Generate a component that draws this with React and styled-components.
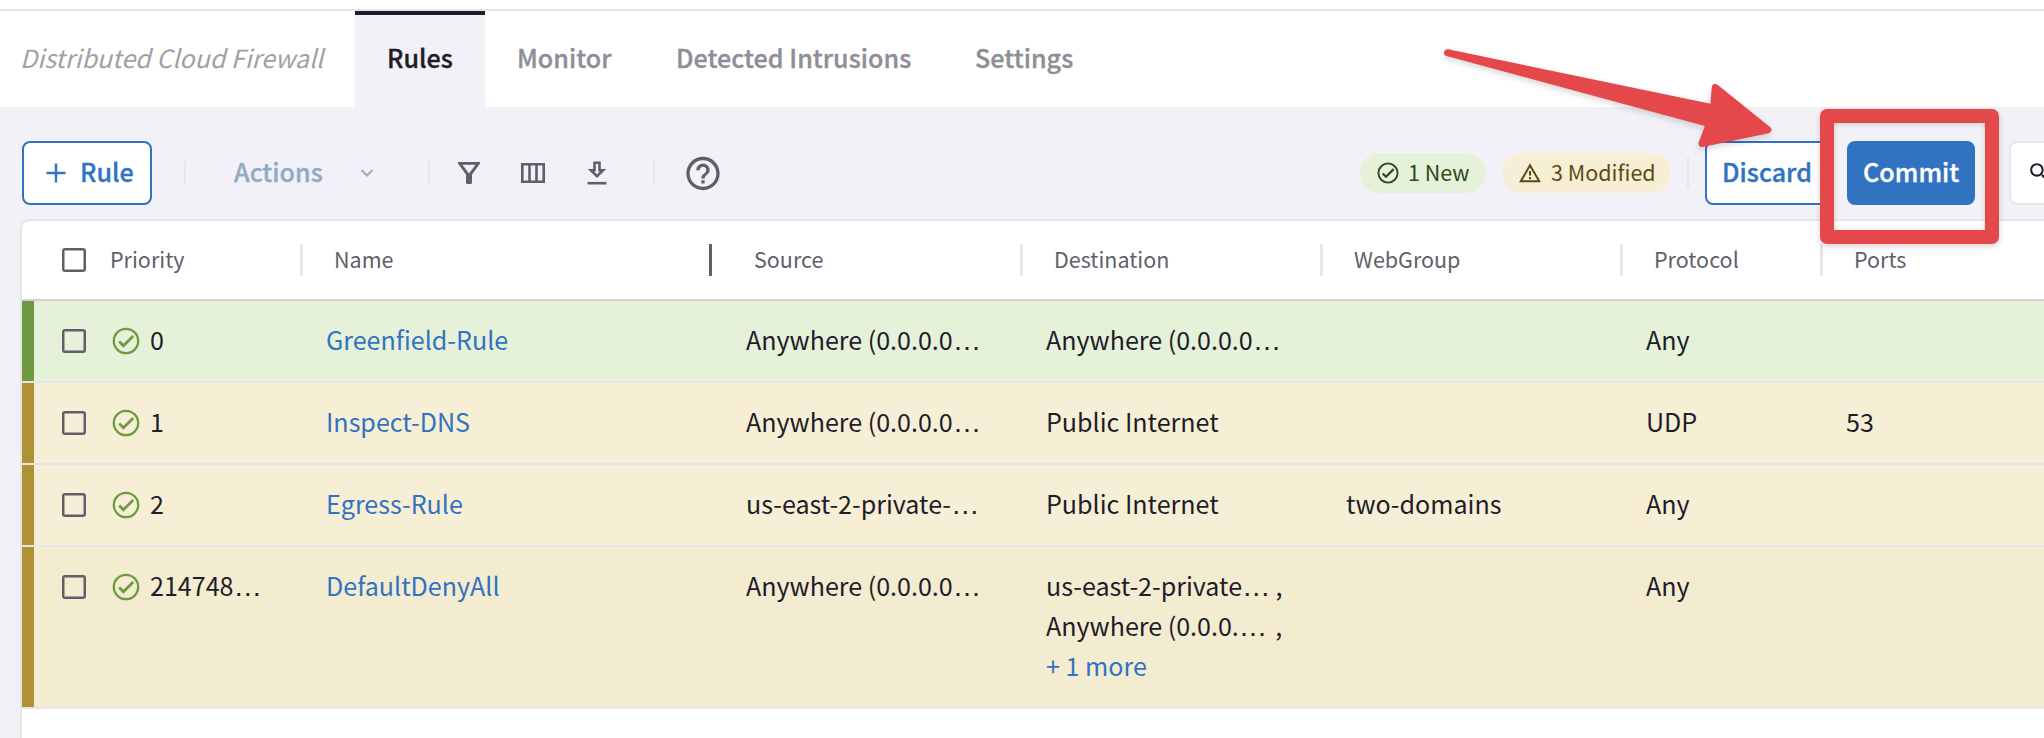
import React from "react";
import styled, { createGlobalStyle, css } from "styled-components";
import { MdHelpOutline, MdSearch } from "react-icons/md";

const c = {
  page: "#f2f1f7",
  line: "#e6e5ea",
  strongLine: "#d1cfda",
  ink: "#1e1d29",
  icon: "#605f69",
  blue: "#3173c0",
  muted: "#91abc3",
  green: "#2f4a1c",
  brown: "#5b4b12",
  red: "#e4484b",
};

const Global = createGlobalStyle`
  * { box-sizing: border-box; }
  body {
    margin: 0;
    background: ${c.page};
    color: ${c.ink};
    font-family: "Noto Sans CJK SC", "Noto Sans", sans-serif;
    font-size: 25.07px;
    line-height: 40px;
    overflow: hidden;
  }
`;

const semibold = css`
  font-weight: 500;
  letter-spacing: 0.05px;
  -webkit-text-stroke: 0.35px currentColor;
`;

const Page = styled.div`
  position: relative;
  width: 2044px;
  height: 738px;
  overflow: hidden;
  display: flex;
  flex-direction: column;
`;

const TopStrip = styled.div`
  flex: none;
  height: 11px;
  background: #fff;
  border-bottom: 2px solid ${c.line};
`;

const TabBar = styled.nav`
  flex: none;
  display: flex;
  height: 96px;
  background: #fff;
  white-space: nowrap;
`;

const Title = styled.div`
  width: 355px;
  padding: 26px 0 0 20px;
  font-style: italic;
  color: #a1a0a5;
`;

const Tab = styled.div`
  width: ${(p) => p.$w}px;
  padding: 22px 0 0 32px;
  border-top: 4px solid transparent;
  ${semibold}
  color: #8f8e97;
  ${(p) =>
    p.$active &&
    css`
      background: ${c.page};
      border-top-color: ${c.ink};
      color: ${c.ink};
    `}
`;

const Toolbar = styled.div`
  flex: none;
  display: flex;
  align-items: center;
  height: 112px;
  padding: 20px 0 0 22px;
  white-space: nowrap;
`;

const Button = styled.button`
  flex: none;
  display: flex;
  align-items: center;
  gap: 14px;
  width: ${(p) => p.$w}px;
  height: 64px;
  margin: 0 0 0 ${(p) => p.$ml || 0}px;
  padding: 0 0 0 ${(p) => p.$pl}px;
  border: 2px solid ${c.blue};
  border-radius: 8px;
  background: ${(p) => (p.$primary ? c.blue : "#fff")};
  color: ${(p) => (p.$primary ? "#fff" : c.blue)};
  font: inherit;
  ${semibold}
`;

const ButtonLabel = styled.span`
  margin-top: -4px;
`;

const ActionsMenu = styled.div`
  flex: none;
  display: flex;
  align-items: center;
  width: 242px;
  padding-left: 48px;
  color: ${c.muted};
`;

const ActionsLabel = styled.span`
  width: 126px;
  margin-top: -4px;
  ${semibold}
`;

const Divider = styled.span`
  flex: none;
  width: 2px;
  height: ${(p) => p.$h || 24}px;
  margin-left: ${(p) => p.$ml || 0}px;
  background: ${c.line};
`;

const IconSlot = styled.span`
  flex: none;
  display: flex;
  width: ${(p) => p.$w}px;
  margin-left: ${(p) => p.$ml}px;
  color: ${c.icon};
`;

const Pill = styled.span`
  flex: none;
  display: flex;
  align-items: center;
  width: ${(p) => p.$w}px;
  height: 40px;
  margin-left: ${(p) => p.$ml}px;
  padding-left: ${(p) => p.$pl}px;
  border-radius: 20px;
  background: ${(p) => p.$bg};
  color: ${(p) => p.$fg};
  font-size: 21.5px;
`;

const PillText = styled.span`
  margin: -3px 0 0 9px;
`;

const SearchBox = styled.div`
  flex: none;
  display: flex;
  width: 300px;
  height: 64px;
  margin-left: 34px;
  padding: 17px 16px;
  border: 2px solid ${c.line};
  border-radius: 8px;
  background: #fff;
`;

const Table = styled.section`
  flex: none;
  width: 2100px;
  height: 560px;
  margin-left: 20px;
  border: 2px solid ${c.line};
  border-radius: 10px 0 0 0;
  background: #fff;
  white-space: nowrap;
`;

const columns = css`
  display: grid;
  grid-template-columns: 280px 420px 300px 300px 300px 200px 300px;
`;

const HeaderRow = styled.div`
  ${columns}
  align-items: center;
  height: 80px;
  border-bottom: 2px solid ${c.strongLine};
  font-size: 21.5px;
  color: ${c.icon};
`;

const HeaderCell = styled.div`
  display: flex;
  align-items: center;
  height: 32px;
  padding-left: ${(p) => (p.$first ? 40 : 32)}px;
`;

const HeaderLabel = styled.span`
  flex: 1;
  margin-top: -3px;
`;

const Resizer = styled.span`
  width: 3px;
  height: 32px;
  margin-right: ${(p) => (p.$active ? 10 : -1)}px;
  background: ${(p) => (p.$active ? c.icon : c.line)};
`;

const Row = styled.div`
  ${columns}
  height: ${(p) => (p.$tall ? 162 : 82)}px;
  border-bottom: 2px solid ${c.line};
  background: ${(p) => p.$bg};
`;

const Cell = styled.div`
  padding: 18px 0 0 24px;
  color: ${(p) => (p.$link ? c.blue : "inherit")};
`;

const PriorityCell = styled.div`
  display: flex;
  align-items: flex-start;
  padding: 20px 0 0 28px;
  border-left: 12px solid ${(p) => p.$strip};
`;

const Checkbox = styled.span`
  flex: none;
  width: 24px;
  height: 24px;
  margin: ${(p) => (p.$header ? "0 24px 0 0" : "8px 26px 0 0")};
  border: 2px solid ${c.icon};
  border-radius: 3px;
  box-shadow: inset 0 0 0 0.5px ${c.icon};
`;

const StatusWrap = styled.span`
  flex: none;
  display: flex;
  width: 28px;
  padding-top: 6px;
`;

const PriorityText = styled.span`
  margin: -2px 0 0 10px;
`;

const More = styled.div`
  color: ${c.blue};
`;

const EllipsisGlyph = styled.span`
  font-family: "Liberation Sans", sans-serif;
  font-size: 28.5px;
  line-height: 1;
`;

const Comma = styled.span`
  margin-left: ${(p) => p.$gap}px;
`;

const Highlight = styled.div`
  position: absolute;
  left: 1820px;
  top: 109px;
  width: 179px;
  height: 135px;
  border: 14px solid ${c.red};
  border-radius: 7px;
  box-shadow: 0 2px 6px rgba(0, 0, 0, 0.18), inset 0 1px 5px rgba(0, 0, 0, 0.18);
`;

const ArrowLayer = styled.svg`
  position: absolute;
  left: 1430px;
  top: 36px;
  overflow: visible;
  filter: drop-shadow(0 3px 3px rgba(0, 0, 0, 0.15));
`;

const Dots = () => <EllipsisGlyph>…</EllipsisGlyph>;

const CheckCircle = ({ size, color, w = 2 }) => (
  <svg width={size} height={size} viewBox="0 0 28 28" fill="none" stroke={color} strokeWidth={w}>
    <circle cx="14" cy="14" r="12.2" />
    <path d="M7.2 14.6 11.4 18.7 21.2 9" strokeWidth={w * 1.2} />
  </svg>
);

const Warning = () => (
  <svg width="24" height="24" viewBox="0 0 24 24" fill="none" stroke={c.brown} strokeWidth="2">
    <path d="M2.8 20.2 12 4.2l9.2 16z" />
    <path d="M12 10v4.6M12 16v2.2" />
  </svg>
);

const Plus = () => (
  <svg width="20" height="20" viewBox="0 0 20 20" stroke={c.blue} strokeWidth="2.4">
    <path d="M10 .5v19M.5 10h19" />
  </svg>
);

const Chevron = () => (
  <svg width="14" height="10" viewBox="0 0 14 10" fill="none" stroke={c.muted} strokeWidth="2">
    <path d="m1.5 2 5.5 5.5L12.5 2" />
  </svg>
);

const Filter = () => (
  <svg width="22" height="22" viewBox="0 0 22 22" fill={c.icon}>
    <path
      fillRule="evenodd"
      d="M0 0h22v1.6L14 12.4v8.1q0 1.5-1.5 1.5h-3Q8 22 8 20.5v-8.1L0 1.6zM4.4 2.7 11 11.6l6.6-8.9z"
    />
  </svg>
);

const Columns = () => (
  <svg width="24" height="20" viewBox="0 0 24 20" fill="none" stroke={c.icon} strokeWidth="2.6">
    <path d="M1.3 1.3h21.4v17.4H1.3zM8.5 1.3v17.4M15.5 1.3v17.4" />
  </svg>
);

const Download = () => (
  <svg width="20" height="24" viewBox="0 0 20 24" fill="none" stroke={c.icon} strokeWidth="2.6">
    <path d="M7.500 1.800h5v7.500h3.600L10 15.300 3.900 9.300h3.600z" />
    <path d="M.6 22.200h18.800" />
  </svg>
);

const rules = [
  { priority: "0", name: "Greenfield-Rule", source: <>Anywhere (0.0.0.0<Dots /></>, dest: <>Anywhere (0.0.0.0<Dots /></>, protocol: "Any", bg: "#e5f1d9", strip: "#6f9a41" },
  { priority: "1", name: "Inspect-DNS", source: <>Anywhere (0.0.0.0<Dots /></>, dest: "Public Internet", protocol: "UDP", ports: "53", bg: "#f7efd5", strip: "#b09135" },
  { priority: "2", name: "Egress-Rule", source: <>us-east-2-private-<Dots /></>, dest: "Public Internet", web: "two-domains", protocol: "Any", bg: "#f7efd5", strip: "#b09135" },
  {
    priority: <>214748<Dots /></>,
    name: "DefaultDenyAll",
    source: <>Anywhere (0.0.0.0<Dots /></>,
    dest: (
      <>
        <div>us-east-2-private<Dots /><Comma $gap={5}>,</Comma></div>
        <div>Anywhere (0.0.0.<Dots /><Comma $gap={8}>,</Comma></div>
        <More>+ 1 more</More>
      </>
    ),
    protocol: "Any",
    bg: "#f4ecd1",
    strip: "#b09135",
    tall: true,
  },
];

const headers = ["Name", "Source", "Destination", "WebGroup", "Protocol", "Ports"];

export default function App() {
  return (
    <Page>
      <Global />
      <TopStrip />
      <TabBar>
        <Title>Distributed Cloud Firewall</Title>
        <Tab $w={130} $active>Rules</Tab>
        <Tab $w={159}>Monitor</Tab>
        <Tab $w={299}>Detected Intrusions</Tab>
        <Tab $w={160}>Settings</Tab>
      </TabBar>
      <Toolbar>
        <Button $w={130} $pl={22}>
          <Plus />
          <ButtonLabel>Rule</ButtonLabel>
        </Button>
        <Divider $ml={32} />
        <ActionsMenu>
          <ActionsLabel>Actions</ActionsLabel>
          <Chevron />
        </ActionsMenu>
        <Divider />
        <IconSlot $w={22} $ml={28}><Filter /></IconSlot>
        <IconSlot $w={24} $ml={41}><Columns /></IconSlot>
        <IconSlot $w={20} $ml={42}><Download /></IconSlot>
        <Divider $ml={46} />
        <IconSlot $w={40} $ml={28}><MdHelpOutline size={41} /></IconSlot>
        <Pill $w={126} $ml={637} $pl={17} $bg="#e5f1d9" $fg={c.green}>
          <CheckCircle size={22} color={c.green} w={2.4} />
          <PillText>1 New</PillText>
        </Pill>
        <Pill $w={169} $ml={16} $pl={16} $bg="#f7efd5" $fg={c.brown}>
          <Warning />
          <PillText>3 Modified</PillText>
        </Pill>
        <Divider $h={32} $ml={16} />
        <Button $w={126} $ml={16} $pl={15}>
          <ButtonLabel>Discard</ButtonLabel>
        </Button>
        <Button $w={128} $ml={16} $pl={14} $primary>
          <ButtonLabel>Commit</ButtonLabel>
        </Button>
        <SearchBox><MdSearch size={25} /></SearchBox>
      </Toolbar>
      <Table>
        <HeaderRow>
          <HeaderCell $first>
            <Checkbox $header />
            <HeaderLabel>Priority</HeaderLabel>
            <Resizer />
          </HeaderCell>
          {headers.map((h) => (
            <HeaderCell key={h}>
              <HeaderLabel>{h}</HeaderLabel>
              {h !== "Ports" && <Resizer $active={h === "Name"} />}
            </HeaderCell>
          ))}
        </HeaderRow>
        {rules.map((r) => (
          <Row key={r.name} $bg={r.bg} $tall={r.tall}>
            <PriorityCell $strip={r.strip}>
              <Checkbox />
              <StatusWrap>
                <CheckCircle size={28} color="#6f9a41" w={2.3} />
              </StatusWrap>
              <PriorityText>{r.priority}</PriorityText>
            </PriorityCell>
            <Cell $link>{r.name}</Cell>
            <Cell>{r.source}</Cell>
            <Cell>{r.dest}</Cell>
            <Cell>{r.web}</Cell>
            <Cell>{r.protocol}</Cell>
            <Cell>{r.ports}</Cell>
          </Row>
        ))}
      </Table>
      <Highlight />
      <ArrowLayer width="350" height="120" viewBox="1430 36 350 120" fill={c.red} stroke={c.red} strokeWidth="7" strokeLinejoin="round">
        <path d="M1447.500 52.700 1713.500 108 1715.300 87.500 1767.800 129.800 1702 143.500 1709.500 123.500Z" />
      </ArrowLayer>
    </Page>
  );
}
